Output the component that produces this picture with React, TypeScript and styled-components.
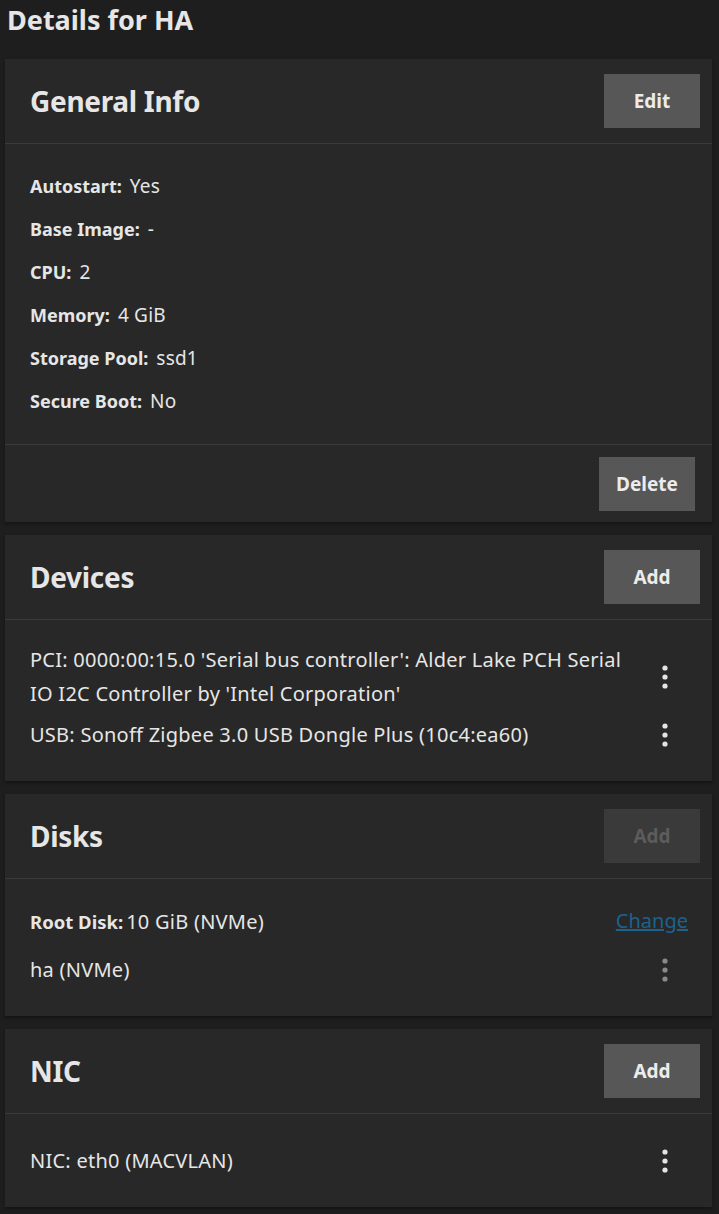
import * as React from "react";
import styled, { createGlobalStyle } from "styled-components";

const GlobalStyle = createGlobalStyle`
  html, body {
    margin: 0;
    padding: 0;
    background: #1e1e1e;
  }
  body {
    font-family: "Noto Sans", "Open Sans", sans-serif;
    color: #e6e6e6;
  }
`;

const Page = styled.div`
  display: flex;
  flex-direction: column;
  gap: 13px;
  padding: 0 7px 8px 5px;
`;

const PageTitle = styled.h1`
  margin: 0 0 0 2px;
  height: 46px;
  line-height: 40px;
  font-size: 27px;
  font-weight: 700;
  color: #e6e6e6;
`;

const Card = styled.section`
  background: #282828;
  box-shadow: 0 2px 3px rgba(0, 0, 0, 0.35);
`;

const CardHeader = styled.div`
  display: flex;
  align-items: center;
  justify-content: space-between;
  padding: 15px 12px 15px 25px;
  border-bottom: 1px solid #3a3a3a;
`;

const CardTitle = styled.h2`
  margin: 0;
  font-size: 28px;
  font-weight: 700;
  letter-spacing: -0.3px;
  color: #e6e6e6;
`;

const Button = styled.button<{ disabled?: boolean }>`
  width: 96px;
  height: 54px;
  border: none;
  background: ${(p) => (p.disabled ? "#3a3a3a" : "#575757")};
  color: ${(p) => (p.disabled ? "#5c5c5c" : "#ececec")};
  font-family: inherit;
  font-size: 19px;
  font-weight: 700;
  cursor: ${(p) => (p.disabled ? "default" : "pointer")};
`;

const InfoList = styled.div`
  padding: 21px 25px;
`;

const InfoRow = styled.div`
  height: 43px;
  line-height: 43px;
  font-size: 19px;
  letter-spacing: 0.2px;
`;

const Label = styled.span`
  font-size: 18px;
  letter-spacing: 0;
  font-weight: 700;
  margin-right: 8px;
`;

const CardFooter = styled.div`
  display: flex;
  justify-content: flex-end;
  padding: 12px 17px 11px;
  border-top: 1px solid #3a3a3a;
`;

const ItemList = styled.div`
  padding: 23px 25px 22px;
`;

const Item = styled.div<{ $tight?: boolean }>`
  display: flex;
  align-items: ${(p) => (p.$tight ? "flex-start" : "center")};
  justify-content: space-between;
  min-height: ${(p) => (p.$tight ? "44px" : "48px")};
  font-size: 20px;
  letter-spacing: 0.25px;
  line-height: ${(p) => (p.$tight ? "40px" : "34px")};
`;

const ItemText = styled.div`
  flex: 1;
  padding-right: 20px;
  & b {
    font-size: 18.5px;
    letter-spacing: 0;
    font-weight: 700;
    margin-right: 3px;
  }
`;

const Link = styled.a`
  color: #1b628f;
  text-decoration: underline;
  font-size: 20px;
  letter-spacing: 0;
  margin-right: -1px;
  line-height: 38px;
`;

const IconButton = styled.button<{ $muted?: boolean }>`
  width: 40px;
  height: 40px;
  margin-right: 2px;
  border: none;
  background: transparent;
  display: flex;
  align-items: center;
  justify-content: center;
  color: ${(p) => (p.$muted ? "#8a8a8a" : "#e4e4e4")};
  padding: 0;
`;

const Kebab = ({ muted }: { muted?: boolean }) => (
  <IconButton $muted={muted}>
    <svg width="8" height="26" viewBox="0 0 8 26" fill="currentColor">
      <circle cx="4" cy="4" r="2.6" />
      <circle cx="4" cy="13" r="2.6" />
      <circle cx="4" cy="22" r="2.6" />
    </svg>
  </IconButton>
);

const info: [string, string][] = [
  ["Autostart:", "Yes"],
  ["Base Image:", "-"],
  ["CPU:", "2"],
  ["Memory:", "4 GiB"],
  ["Storage Pool:", "ssd1"],
  ["Secure Boot:", "No"],
];

export default function App() {
  return (
    <>
      <GlobalStyle />
      <Page>
        <PageTitle>Details for HA</PageTitle>

        <Card>
          <CardHeader>
            <CardTitle>General Info</CardTitle>
            <Button>Edit</Button>
          </CardHeader>
          <InfoList>
            {info.map(([k, v]) => (
              <InfoRow key={k}>
                <Label>{k}</Label>
                {v}
              </InfoRow>
            ))}
          </InfoList>
          <CardFooter>
            <Button>Delete</Button>
          </CardFooter>
        </Card>

        <Card>
          <CardHeader>
            <CardTitle>Devices</CardTitle>
            <Button>Add</Button>
          </CardHeader>
          <ItemList>
            <Item>
              <ItemText>
                PCI: 0000:00:15.0 'Serial bus controller': Alder Lake PCH Serial
                IO I2C Controller by 'Intel Corporation'
              </ItemText>
              <Kebab />
            </Item>
            <Item>
              <ItemText>USB: Sonoff Zigbee 3.0 USB Dongle Plus (10c4:ea60)</ItemText>
              <Kebab />
            </Item>
          </ItemList>
        </Card>

        <Card>
          <CardHeader>
            <CardTitle>Disks</CardTitle>
            <Button disabled>Add</Button>
          </CardHeader>
          <ItemList>
            <Item $tight>
              <ItemText>
                <b>Root Disk:</b>10 GiB (NVMe)
              </ItemText>
              <Link href="#">Change</Link>
            </Item>
            <Item>
              <ItemText>ha (NVMe)</ItemText>
              <Kebab muted />
            </Item>
          </ItemList>
        </Card>

        <Card>
          <CardHeader>
            <CardTitle>NIC</CardTitle>
            <Button>Add</Button>
          </CardHeader>
          <ItemList>
            <Item>
              <ItemText>NIC: eth0 (MACVLAN)</ItemText>
              <Kebab />
            </Item>
          </ItemList>
        </Card>
      </Page>
    </>
  );
}
